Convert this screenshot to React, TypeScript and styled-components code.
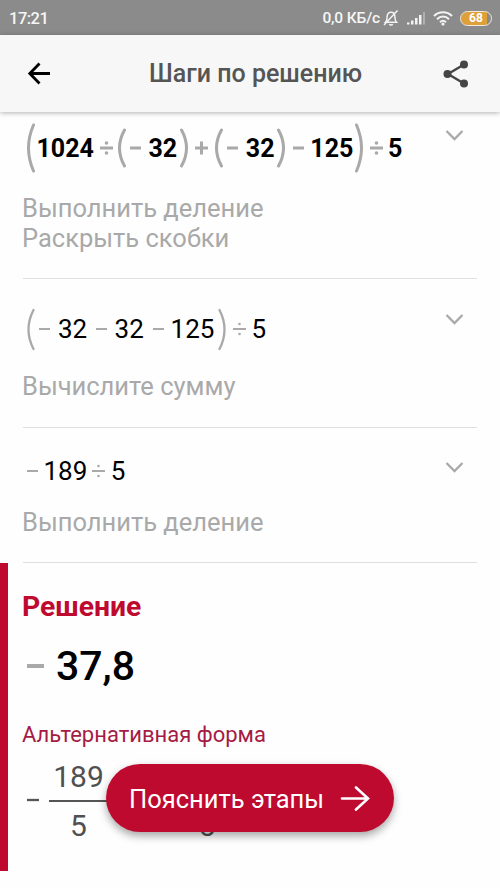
import React from 'react';
import styled, { createGlobalStyle } from 'styled-components';

const GlobalStyle = createGlobalStyle`
  * {
    box-sizing: border-box;
  }

  body {
    margin: 0;
    background: #fefefe;
    font-family: Roboto, 'Liberation Sans', sans-serif;
  }
`;

const crimson = '#bf0a30';
const grey = '#a9a9a9';

const Screen = styled.div`
  position: relative;
  display: flex;
  flex-direction: column;
  width: 500px;
  height: 888px;
  overflow: hidden;
  background: #fefefe;
`;

const StatusBar = styled.div`
  display: flex;
  align-items: center;
  flex: none;
  height: 35px;
  padding: 1px 8px 0 9px;
  background: #8b8b8b;
  color: #f6f6f6;
`;

const Clock = styled.span`
  flex: 1;
  font-size: 16.5px;
  font-weight: 500;
  letter-spacing: -0.5px;
`;

const NetSpeed = styled.span`
  margin-right: 3px;
  font-size: 15.5px;
  font-weight: 500;
  letter-spacing: -0.15px;
`;

const StatusIcons = styled.div`
  display: flex;
  align-items: center;
  gap: 7px;
`;

const Battery = styled.span`
  display: flex;
  align-items: center;
  justify-content: center;
  width: 32px;
  height: 15px;
  margin-left: 7px;
  border: 1.5px solid #f3ead8;
  border-radius: 8px;
  background: linear-gradient(to right, #dfa03a 0 88%, #8b8b8b 88%);
  background-clip: padding-box;
  color: #fff;
  font-size: 12px;
  font-weight: 700;
  line-height: 12px;
`;

const Header = styled.header`
  position: relative;
  display: flex;
  align-items: center;
  flex: none;
  height: 77px;
  padding: 0 31px 0 27px;
  background: #f7f7f7;
  box-shadow: 0 1px 5px rgba(0, 0, 0, 0.3);
`;

const Title = styled.h1`
  flex: 1;
  margin: 0 0 0 98px;
  color: #555;
  font-size: 25px;
  font-weight: 500;
  white-space: nowrap;
`;

const Step = styled.section<{ $top: number; $bottom: number }>`
  flex: none;
  margin: 0 23px;
  padding: ${({ $top }) => $top}px 0 ${({ $bottom }) => $bottom}px;
  border-bottom: 1px solid #dedede;
`;

const StepHead = styled.div`
  display: flex;
  justify-content: space-between;
  align-items: flex-start;
`;

const Expression = styled.div<{ $height: number }>`
  display: flex;
  align-items: center;
  height: ${({ $height }) => $height}px;
  color: #000;
`;

const Num = styled.span<{ $gap: number; $size: number; $weight: number }>`
  margin-left: ${({ $gap }) => $gap}px;
  font-size: ${({ $size }) => $size}px;
  font-weight: ${({ $weight }) => $weight};
  line-height: 1;
`;

const Sign = styled.svg<{ $gap: number; $color?: string }>`
  flex: none;
  margin-left: ${({ $gap }) => $gap}px;
  fill: none;
  stroke: ${({ $color }) => $color || grey};
`;

const Toggle = styled.svg`
  flex: none;
  margin: 7px 13px 0 0;
`;

const Caption = styled.p`
  margin: 20px 0 0 -1px;
  color: ${grey};
  font-size: 25.5px;
  line-height: 30px;
  white-space: pre-line;
`;

const Result = styled.section`
  display: flex;
  flex-direction: column;
  flex: none;
  height: 308px;
  padding: 28px 0 0 14px;
  border-left: 8px solid ${crimson};
`;

const ResultTitle = styled.h2`
  margin: 0;
  color: ${crimson};
  font-size: 28.3px;
  font-weight: 700;
  line-height: 32px;
`;

const AltTitle = styled.h3`
  margin: 12px 0 0;
  color: #a51b44;
  font-size: 22px;
  font-weight: 400;
  line-height: 28px;
`;

const AltForm = styled.div`
  display: flex;
  align-items: center;
  height: 76px;
  margin-top: 13px;
  color: #505050;
  font-size: 30px;
`;

const Fraction = styled.span<{ $gap: number; $width: number }>`
  display: flex;
  flex-direction: column;
  align-items: center;
  width: ${({ $width }) => $width}px;
  margin-left: ${({ $gap }) => $gap}px;
`;

const Numerator = styled.span`
  height: 48px;
  line-height: 49px;
`;

const Denominator = styled.span`
  width: 100%;
  height: 48px;
  border-top: 2px solid #555;
  line-height: 47px;
  text-align: center;
`;

const ExplainButton = styled.button`
  position: absolute;
  left: 106px;
  top: 764px;
  display: flex;
  align-items: center;
  justify-content: space-between;
  width: 288px;
  height: 68px;
  padding: 2px 24px 0 23px;
  border: 0;
  border-radius: 34px;
  background: ${crimson};
  box-shadow: 0 4px 8px rgba(0, 0, 0, 0.35);
  color: #fff;
  font-family: inherit;
  font-size: 25.5px;
  white-space: nowrap;
`;

type Kind = 'num' | 'minus' | 'plus' | 'div' | 'open' | 'close';
// kind, gap before it, and the digits or the height of a bracket
type Token = [Kind, number, (string | number)?];

interface StepData {
  top: number;
  bottom: number;
  height: number;
  bold?: boolean;
  tokens: Token[];
  caption: string;
}

const steps: StepData[] = [
  {
    top: 11,
    bottom: 25,
    height: 50,
    bold: true,
    tokens: [
      ['open', 4, 50],
      ['num', 1.5, '1024'],
      ['div', 6],
      ['open', 5.5, 40],
      ['minus', 4],
      ['num', 7, '32'],
      ['close', 2.8, 40],
      ['plus', 7],
      ['open', 7.5, 40],
      ['minus', 4],
      ['num', 7.5, '32'],
      ['close', 2.3, 40],
      ['minus', 8.5],
      ['num', 6, '125'],
      ['close', 2, 50],
      ['div', 6.5],
      ['num', 5, '5'],
    ],
    caption: 'Выполнить деление\nРаскрыть скобки',
  },
  {
    top: 28,
    bottom: 26,
    height: 44,
    tokens: [
      ['open', 3.7, 43],
      ['minus', 4.3],
      ['num', 8, '32'],
      ['minus', 8.8],
      ['num', 7.5, '32'],
      ['minus', 8.8],
      ['num', 7, '125'],
      ['close', 4, 43],
      ['div', 7],
      ['num', 5, '5'],
    ],
    caption: 'Вычислите сумму',
  },
  {
    top: 27,
    bottom: 25,
    height: 32,
    tokens: [
      ['minus', 3.5],
      ['num', 6, '189'],
      ['div', 5],
      ['num', 5.5, '5'],
    ],
    caption: 'Выполнить деление',
  },
];

const renderToken = ([kind, gap, value]: Token, bold: boolean, key: number) => {
  const stroke = bold ? 3 : 2;
  if (kind === 'num') {
    return (
      <Num key={key} $gap={gap} $size={bold ? 25 : 26} $weight={bold ? 700 : 400}>
        {value}
      </Num>
    );
  }
  if (kind === 'open' || kind === 'close') {
    const h = Number(value);
    const d =
      kind === 'open'
        ? `M6.5 2 Q-3.5 ${h / 2} 6.5 ${h - 2}`
        : `M1.5 2 Q11.5 ${h / 2} 1.5 ${h - 2}`;
    return (
      <Sign key={key} $gap={gap} width="8" height={h} strokeWidth={bold ? 3 : 2.3} strokeLinecap="round">
        <path d={d} />
      </Sign>
    );
  }
  if (kind === 'minus') {
    return (
      <Sign key={key} $gap={gap} width="11" height="14" strokeWidth={stroke}>
        <path d="M0 7h11" />
      </Sign>
    );
  }
  if (kind === 'plus') {
    return (
      <Sign key={key} $gap={gap} width="13" height="14" strokeWidth={stroke}>
        <path d="M0 7h13M6.5 0.5v13" />
      </Sign>
    );
  }
  return (
    <Sign key={key} $gap={gap} width="13" height="14" strokeWidth={stroke}>
      <path d="M0 7h13" />
      <circle cx="6.5" cy="2" r={stroke / 2 + 0.3} fill={grey} stroke="none" />
      <circle cx="6.5" cy="12" r={stroke / 2 + 0.3} fill={grey} stroke="none" />
    </Sign>
  );
};

const MutedBell = () => (
  <svg width="16" height="18" fill="none" stroke="#f3f3f3" strokeWidth="1.5">
    <path d="M2.5 13.2c1.4-1.4 1.6-2.6 1.6-5.2C4.1 5 5.6 3.3 8 3.3s3.9 1.7 3.9 4.7c0 2.6.2 3.8 1.6 5.2zM6.3 15.2c.7 1.1 2.7 1.1 3.4 0M14.5 1.5 1 16" />
  </svg>
);

const Signal = () => (
  <svg width="20" height="14" fill="#f3f3f3">
    <path d="M1 11.5h2.5v2H1zM5 9.5h2.5v4H5zM9 7h2.5v6.5H9zM13 4h2.5v9.5H13z" />
    <path d="M17 1h2v12.5h-2z" opacity="0.35" />
  </svg>
);

const Wifi = () => (
  <svg width="20" height="16" fill="none" stroke="#f3f3f3" strokeWidth="2">
    <path d="M1 6c5-5 13-5 18 0M4 9.2c3.5-3.5 8.5-3.5 12 0M7 12.2c1.8-1.7 4.2-1.7 6 0" />
    <circle cx="10" cy="14" r="1.6" fill="#f3f3f3" stroke="none" />
  </svg>
);

const App: React.FC = () => {
  return (
    <>
      <GlobalStyle />
      <Screen>
        <StatusBar>
          <Clock>17:21</Clock>
          <NetSpeed>0,0 КБ/с</NetSpeed>
          <StatusIcons>
            <MutedBell />
            <Signal />
            <Wifi />
          </StatusIcons>
          <Battery>68</Battery>
        </StatusBar>

        <Header>
          <svg width="24" height="24" fill="none" stroke="#000" strokeWidth="2.8">
            <path d="M23 11.5H3M12.5 1.5 2.8 11.5l9.7 10" />
          </svg>
          <Title>Шаги по решению</Title>
          <svg width="26" height="28" fill="#454545" stroke="#454545">
            <path d="M21 4.5 5 14l16 9.5" fill="none" strokeWidth="2.4" />
            <circle cx="21" cy="4.5" r="4" stroke="none" />
            <circle cx="4.5" cy="14" r="4" stroke="none" />
            <circle cx="21" cy="23.5" r="4" stroke="none" />
          </svg>
        </Header>

        {steps.map((step, i) => (
          <Step key={i} $top={step.top} $bottom={step.bottom}>
            <StepHead>
              <Expression $height={step.height}>
                {step.tokens.map((token, k) => renderToken(token, !!step.bold, k))}
              </Expression>
              <Toggle width="19" height="11" fill="none" stroke={grey} strokeWidth="2.3">
                <path d="M1.5 1 9.5 9l8-8" />
              </Toggle>
            </StepHead>
            <Caption>{step.caption}</Caption>
          </Step>
        ))}

        <Result>
          <ResultTitle>Решение</ResultTitle>
          <Expression $height={86}>
            <Sign $gap={5} width="17" height="10" strokeWidth="4">
              <path d="M0 5h17" />
            </Sign>
            <Num $gap={12} $size={41} $weight={500}>
              37,8
            </Num>
          </Expression>
          <AltTitle>Альтернативная форма</AltTitle>
          <AltForm>
            <Sign $gap={5} $color="#555" width="12" height="10" strokeWidth="2.3">
              <path d="M0 5h12" />
            </Sign>
            <Fraction $gap={10} $width={59}>
              <Numerator>189</Numerator>
              <Denominator>5</Denominator>
            </Fraction>
            <Fraction $gap={86} $width={26}>
              <Numerator />
              <Denominator>5</Denominator>
            </Fraction>
          </AltForm>
        </Result>

        <ExplainButton>
          <span>Пояснить этапы</span>
          <svg width="30" height="26" fill="none" stroke="#fff" strokeWidth="2.6" strokeLinecap="round">
            <path d="M2 12.5h26M16 1.5 28 12.5 16 23.5" />
          </svg>
        </ExplainButton>
      </Screen>
    </>
  );
};

export default App;
